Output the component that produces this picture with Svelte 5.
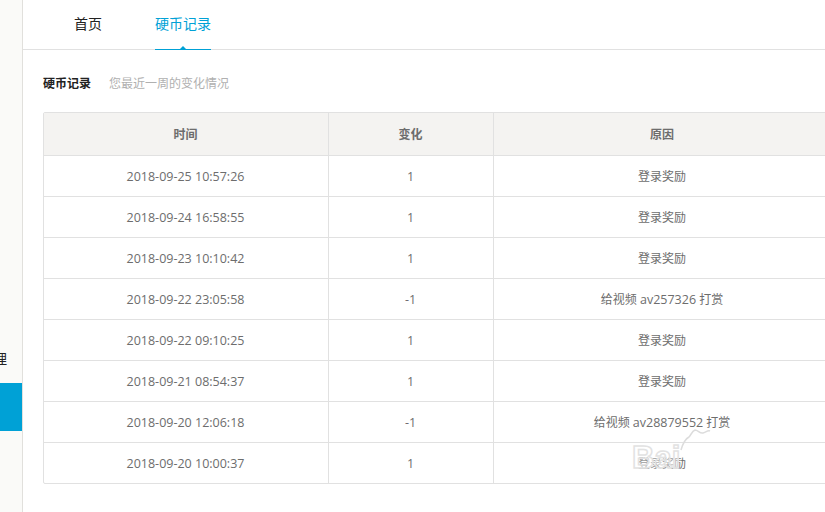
<script lang="ts">
  const tabs = [
    { label: '首页', active: false },
    { label: '硬币记录', active: true },
  ];

  const records = [
    { time: '2018-09-25 10:57:26', delta: 1, av: '' },
    { time: '2018-09-24 16:58:55', delta: 1, av: '' },
    { time: '2018-09-23 10:10:42', delta: 1, av: '' },
    { time: '2018-09-22 23:05:58', delta: -1, av: 'av257326' },
    { time: '2018-09-22 09:10:25', delta: 1, av: '' },
    { time: '2018-09-21 08:54:37', delta: 1, av: '' },
    { time: '2018-09-20 12:06:18', delta: -1, av: 'av28879552' },
    { time: '2018-09-20 10:00:37', delta: 1, av: '' },
  ];
</script>

<div class="page">
  <aside class="sidebar">
    <div class="menu-item">管理</div>
    <div class="menu-active"></div>
  </aside>

  <main class="content">
    <nav class="tabs">
      {#each tabs as tab}
        <span class="tab" class:active={tab.active}>{tab.label}</span>
      {/each}
    </nav>

    <section class="body">
      <header class="title">
        <strong>硬币记录</strong>
        <span>您最近一周的变化情况</span>
      </header>

      <div class="table-wrap">
        <table>
          <thead>
            <tr>
              <th class="c-time">时间</th>
              <th class="c-delta">变化</th>
              <th>原因</th>
            </tr>
          </thead>
          <tbody>
            {#each records as row}
              <tr>
                <td class="num">{row.time}</td>
                <td class="num">{row.delta}</td>
                <td>
                  {#if row.av}
                    给视频 <span class="num">{row.av}</span> 打赏
                  {:else}
                    登录奖励
                  {/if}
                </td>
              </tr>
            {/each}
          </tbody>
        </table>
        <div class="watermark" aria-hidden="true">
          <span>Bai</span>
          <svg width="66" height="26" viewBox="0 0 66 26">
            <path d="M2 25C4 18 6 14 10 12C12 10 13 6 16 5C19 5 21 9 24 8C27 7 29 5 31 6" fill="none" stroke="#dcdcdc" stroke-width="1.5" />
          </svg>
        </div>
      </div>
    </section>
  </main>
</div>

<style>
  :global(body) {
    margin: 0;
    background: #fff;
    overflow: hidden;
  }
  .page {
    display: flex;
    width: 825px;
    height: 512px;
    overflow: hidden;
    font-family: 'Open Sans', 'Noto Sans CJK SC', sans-serif;
    font-size: 12px;
    color: #6d6d6d;
  }
  .sidebar {
    flex: 0 0 23px;
    box-sizing: border-box;
    border-right: 1px solid #e1e0dc;
    background: #fafaf8;
    overflow: hidden;
    padding-top: 349px;
  }
  .menu-item {
    display: flex;
    justify-content: flex-end;
    padding-right: 15px;
    height: 20px;
    line-height: 20px;
    font-size: 14px;
    color: #222;
    white-space: nowrap;
  }
  .menu-active {
    height: 48px;
    margin-top: 14px;
    background: #00a1d6;
  }
  .content {
    flex: 1;
    min-width: 0;
  }
  .tabs {
    display: flex;
    gap: 53px;
    height: 49px;
    padding-left: 51px;
    border-bottom: 1px solid #e1e1e1;
  }
  .tab {
    position: relative;
    height: 49px;
    line-height: 48px;
    font-size: 14px;
    color: #222;
  }
  .tab.active {
    color: #00a1d6;
    border-bottom: 1px solid #00a1d6;
  }
  .tab.active::after {
    content: '';
    position: absolute;
    left: 50%;
    bottom: 0;
    margin-left: -3px;
    border: 3px solid transparent;
    border-top: 0;
    border-bottom-color: #00a1d6;
  }
  .body {
    padding: 0 0 0 20px;
  }
  .title {
    display: flex;
    align-items: center;
    gap: 18px;
    height: 62px;
    padding-top: 3px;
    box-sizing: border-box;
  }
  .title strong {
    font-size: 12px;
    font-weight: 700;
    color: #222;
  }
  .title span {
    color: #b0b0b0;
  }
  .table-wrap {
    position: relative;
    width: 788px;
  }
  table {
    width: 100%;
    table-layout: fixed;
    border-collapse: separate;
    border-spacing: 0;
    border: 1px solid #e1e1e1;
    border-radius: 2px;
  }
  th,
  td {
    padding: 0 1px 0 0;
    text-align: center;
    border-right: 1px solid #e1e1e1;
    border-bottom: 1px solid #e1e1e1;
  }
  th:last-child,
  td:last-child {
    padding-right: 0;
    border-right: 0;
  }
  tbody tr:last-child td {
    border-bottom: 0;
  }
  th {
    height: 42px;
    background: #f4f3f1;
    font-weight: 700;
    color: #6d6d6d;
  }
  td {
    height: 40px;
  }
  .num {
    font-size: 12.5px;
  }
  .c-time {
    width: 283px;
  }
  .c-delta {
    width: 163px;
  }
  .watermark {
    position: absolute;
    left: 589px;
    top: 332px;
    width: 47px;
    height: 27px;
    background: rgba(255, 255, 255, 0.3);
  }
  .watermark span {
    position: absolute;
    left: 0;
    top: -1px;
    font-family: 'Liberation Sans', sans-serif;
    font-size: 31px;
    line-height: 30px;
    font-weight: 700;
    color: rgba(255, 255, 255, 0.3);
    -webkit-text-stroke: 1.5px #e2e2e2;
  }
  .watermark svg {
    position: absolute;
    left: 47px;
    top: -19px;
  }
</style>
